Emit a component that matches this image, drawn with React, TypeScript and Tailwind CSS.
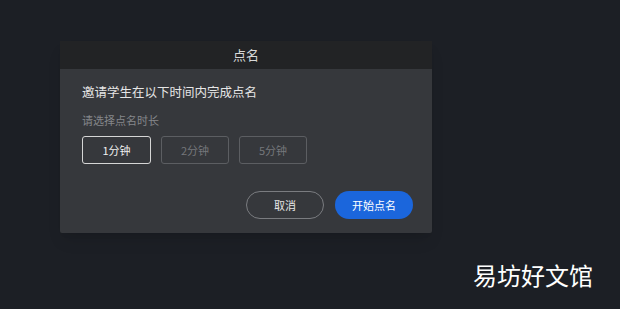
import React, { useState } from 'react';

const durations = ['1分钟', '2分钟', '5分钟'];

const font = { fontFamily: '"Noto Sans CJK SC", "Noto Sans", sans-serif' };

export default function App() {
  const [selected, setSelected] = useState(0);

  return (
    <div className="relative w-[620px] h-[309px] bg-[#1c1f25] pl-[60px] pt-[41px] overflow-hidden" style={font}>
      <div className="w-[372px] h-[192px] flex flex-col bg-[#36383c] rounded-[2px] shadow-lg">
        {/* header */}
        <div className="h-[28px] flex items-center justify-center bg-[#222325] text-[13px] text-[#d8d8d8]">
          点名
        </div>

        <div className="flex-1 flex flex-col pl-[22px] pr-[19px] pt-[13px]">
          <p className="text-[12.5px] leading-[20px] text-[#e6e6e6]">邀请学生在以下时间内完成点名</p>
          <p className="mt-[10px] text-[11px] leading-[16px] text-[#85878b]">请选择点名时长</p>

          <div className="mt-[8px] flex gap-[10px]">
            {durations.map((d, i) => (
              <button
                key={d}
                onClick={() => setSelected(i)}
                className={
                  i === selected
                    ? 'w-[69px] h-[28px] rounded-[3px] border border-[#d6d6d6] text-[11px] text-[#f0f0f0]'
                    : 'w-[68px] h-[28px] rounded-[3px] border border-[#5c5e62] text-[11px] text-[#75777b]'
                }
              >
                {d}
              </button>
            ))}
          </div>

          <div className="mt-[27px] flex justify-end gap-[11px]">
            <button className="w-[78px] h-[28px] rounded-full border border-[#7a7c80] text-[11px] text-[#e6e6e6]">
              取消
            </button>
            <button className="w-[78px] h-[28px] rounded-full bg-[#1b66dc] text-[11px] text-white">
              开始点名
            </button>
          </div>
        </div>
      </div>

      <div className="absolute left-[473px] top-[259px] text-[24px] leading-[32px] text-white">
        易坊好文馆
      </div>
    </div>
  );
}
